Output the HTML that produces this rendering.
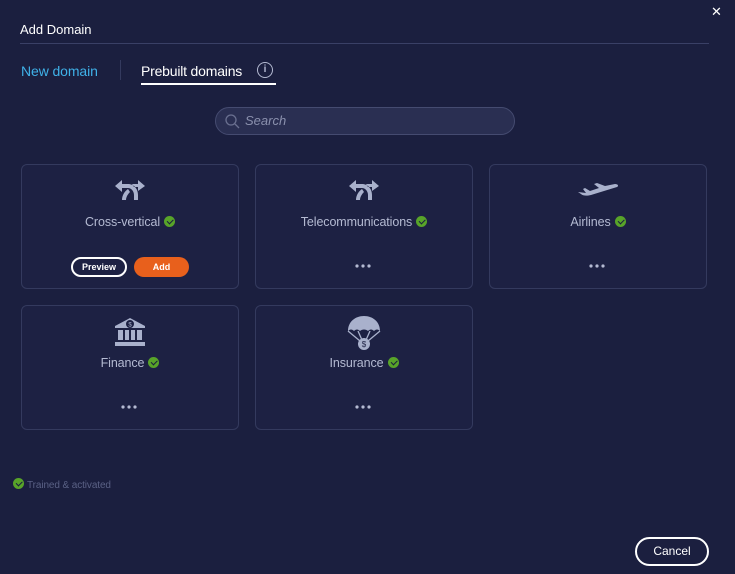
<!DOCTYPE html>
<html><head><style>
*{margin:0;padding:0;box-sizing:border-box}
body{width:735px;height:574px;background:#1b1f3f;font-family:"Liberation Sans",sans-serif;position:relative;overflow:hidden;color:#fff}
.abs{position:absolute}
.card{position:absolute;width:218px;height:125px;border:1px solid #343a5e;border-radius:6px;background:#1d2143}
.lbl{position:absolute;left:0;right:0;top:50px;text-align:center;font-size:12.5px;color:#b4bad2;letter-spacing:-0.1px}
.ck{display:inline-block;width:11px;height:11px;border-radius:50%;background:#58a429;vertical-align:-1px;margin-left:4px;position:relative}
.ck:after{content:"";position:absolute;left:3px;top:2.5px;width:5px;height:2.5px;border-left:1.5px solid #1b1f3f;border-bottom:1.5px solid #1b1f3f;transform:rotate(-45deg)}
.dots{position:absolute;left:99px;top:99px;width:16px;height:4px}
.ic{position:absolute;left:50%;transform:translateX(-50%)}
</style></head><body>
<div class="abs" style="left:20px;top:22px;font-size:13px">Add Domain</div>
<div class="abs" style="left:711px;top:4px;font-size:13px">✕</div>
<div class="abs" style="left:20px;top:43px;width:689px;height:1px;background:#3a4066"></div>
<div class="abs" style="left:21px;top:63px;font-size:14px;color:#3fb1e8;letter-spacing:-0.1px">New domain</div>
<div class="abs" style="left:120px;top:60px;width:1px;height:20px;background:#343a5e"></div>
<div class="abs" style="left:141px;top:63px;font-size:14px;letter-spacing:-0.2px">Prebuilt domains</div>
<div class="abs" style="left:257px;top:62px;width:16px;height:16px;border:1.5px solid #b4bad2;border-radius:50%;color:#b4bad2;font-size:10px;text-align:center;line-height:13px;font-weight:bold">i</div>
<div class="abs" style="left:141px;top:83px;width:135px;height:2px;background:#fff"></div>
<div class="abs" style="left:215px;top:107px;width:300px;height:28px;border:1px solid #454b70;border-radius:14px;background:#2a2f52"></div>
<svg class="abs" style="left:224px;top:113px" width="16" height="16"><circle cx="7" cy="7" r="5" fill="none" stroke="#6a7090" stroke-width="1.3"/><path d="M11 11l4 4" stroke="#6a7090" stroke-width="1.3"/></svg>
<div class="abs" style="left:245px;top:113px;font-size:13px;font-style:italic;color:#8a90ad">Search</div>

<div class="card" style="left:21px;top:164px">
<svg class="ic" style="top:14px" width="34" height="22" viewBox="0 0 34 22"><path d="M2 7l7-6v4h6c6 0 10 5 10 11v5h-4v-5c0-4-3-7-6-7H9v4z M32 7l-7-6v4h-6l2 3h4v4z M9 21c0-5 3-9 6-11l2 3c-2 2-4 5-4 8z" fill="#a9b1cc"/></svg>
<div class="lbl">Cross-vertical<span class="ck"></span></div>
<div class="abs" style="left:49px;top:92px;width:56px;height:20px;border:2px solid #fff;border-radius:10px;font-size:9px;text-align:center;line-height:16px;font-weight:bold">Preview</div>
<div class="abs" style="left:112px;top:92px;width:55px;height:20px;background:#e8601c;border-radius:10px;font-size:9px;text-align:center;line-height:20px;font-weight:bold">Add</div>
</div>
<div class="card" style="left:255px;top:164px">
<svg class="ic" style="top:14px" width="34" height="22" viewBox="0 0 34 22"><path d="M2 7l7-6v4h6c6 0 10 5 10 11v5h-4v-5c0-4-3-7-6-7H9v4z M32 7l-7-6v4h-6l2 3h4v4z M9 21c0-5 3-9 6-11l2 3c-2 2-4 5-4 8z" fill="#a9b1cc"/></svg>
<div class="lbl">Telecommunications<span class="ck"></span></div>
<svg class="dots" viewBox="0 0 16 4"><circle cx="2" cy="2" r="1.6" fill="#b4bad2"/><circle cx="8" cy="2" r="1.6" fill="#b4bad2"/><circle cx="14" cy="2" r="1.6" fill="#b4bad2"/></svg>
</div>
<div class="card" style="left:489px;top:164px">
<svg class="ic" style="top:18px" width="42" height="16" viewBox="0 0 42 16"><path d="M1 9l3 2c2 2 6 2 10 1l26-8c2-1 1-3-2-3l-10 2-8-3-3 1 5 4-9 3-5-3-2 1 3 4z" fill="#a9b1cc"/></svg>
<div class="lbl">Airlines<span class="ck"></span></div>
<svg class="dots" viewBox="0 0 16 4"><circle cx="2" cy="2" r="1.6" fill="#b4bad2"/><circle cx="8" cy="2" r="1.6" fill="#b4bad2"/><circle cx="14" cy="2" r="1.6" fill="#b4bad2"/></svg>
</div>
<div class="card" style="left:21px;top:305px">
<svg class="ic" style="top:11px" width="34" height="30" viewBox="0 0 34 30"><path d="M17 1L2 9v2h30V9z M2 25h30v4H2z M5 13h5v10H5z M12 13h4v10h-4z M18 13h4v10h-4z M24 13h5v10h-5z" fill="#a9b1cc"/><circle cx="17" cy="7" r="4" fill="#1d2143"/><text x="17" y="9.5" font-size="6" text-anchor="middle" fill="#a9b1cc" font-family="Liberation Sans">$</text></svg>
<div class="lbl">Finance<span class="ck"></span></div>
<svg class="dots" viewBox="0 0 16 4"><circle cx="2" cy="2" r="1.6" fill="#b4bad2"/><circle cx="8" cy="2" r="1.6" fill="#b4bad2"/><circle cx="14" cy="2" r="1.6" fill="#b4bad2"/></svg>
</div>
<div class="card" style="left:255px;top:305px">
<svg class="ic" style="top:9px" width="34" height="36" viewBox="0 0 34 36"><path d="M1 16C1 7 8 1 17 1s16 6 16 15c-2-2-4-2-6 0-2-2-4-2-6 0-2-2-6-2-8 0-2-2-4-2-6 0-2-2-4-2-6 0z" fill="#a9b1cc"/><path d="M1 16l12 10M33 16l-12 10M11 16l4 9M23 16l-4 9" stroke="#a9b1cc" stroke-width="1.3"/><circle cx="17" cy="29" r="6" fill="#a9b1cc"/><text x="17" y="32" font-size="8" text-anchor="middle" fill="#1d2143" font-family="Liberation Sans">$</text></svg>
<div class="lbl">Insurance<span class="ck"></span></div>
<svg class="dots" viewBox="0 0 16 4"><circle cx="2" cy="2" r="1.6" fill="#b4bad2"/><circle cx="8" cy="2" r="1.6" fill="#b4bad2"/><circle cx="14" cy="2" r="1.6" fill="#b4bad2"/></svg>
</div>

<div class="abs" style="left:13px;top:478px;font-size:10px;color:#5a6185;letter-spacing:-0.1px"><span class="ck" style="margin:0 3px 0 0"></span>Trained &amp; activated</div>
<div class="abs" style="left:635px;top:537px;width:74px;height:29px;border:2px solid #fff;border-radius:15px;font-size:12px;text-align:center;line-height:25px">Cancel</div>
</body></html>
